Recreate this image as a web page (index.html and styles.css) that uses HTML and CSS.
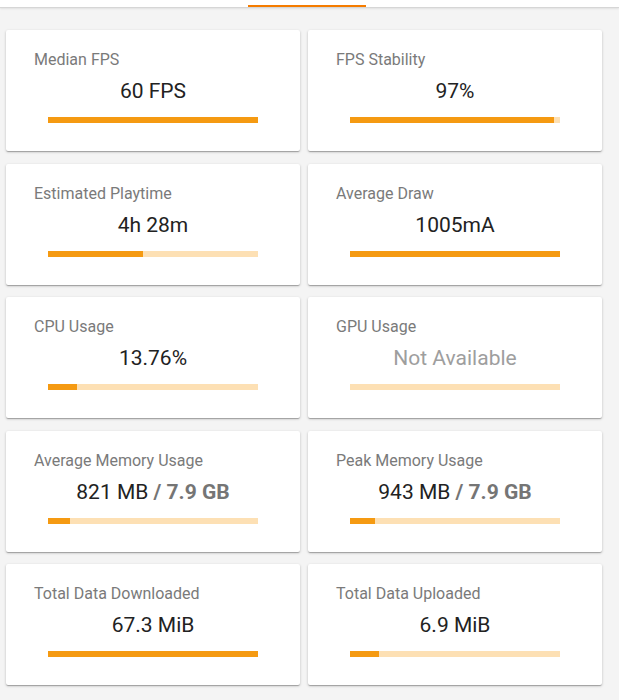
FILE: index.html
```html
<!DOCTYPE html>
<html lang="en">
<head>
    <meta charset="UTF-8">
    <meta name="viewport" content="width=device-width, initial-scale=1.0">
    <title>Session Stats</title>
    <link rel="stylesheet" href="styles.css">
</head>
<body>
    <div class="tabs">
        <div class="tab-indicator"></div>
    </div>

    <div class="stats">
        <div class="card">
            <div class="label">Median FPS</div>
            <div class="value">60 FPS</div>
            <div class="bar"><div class="fill" style="width: 100%;"></div></div>
        </div>
        <div class="card">
            <div class="label">FPS Stability</div>
            <div class="value">97%</div>
            <div class="bar"><div class="fill" style="width: 97%;"></div></div>
        </div>

        <div class="card">
            <div class="label">Estimated Playtime</div>
            <div class="value">4h 28m</div>
            <div class="bar"><div class="fill" style="width: 45%;"></div></div>
        </div>
        <div class="card">
            <div class="label">Average Draw</div>
            <div class="value">1005mA</div>
            <div class="bar"><div class="fill" style="width: 100%;"></div></div>
        </div>

        <div class="card">
            <div class="label">CPU Usage</div>
            <div class="value">13.76%</div>
            <div class="bar"><div class="fill" style="width: 13.76%;"></div></div>
        </div>
        <div class="card">
            <div class="label">GPU Usage</div>
            <div class="value muted">Not Available</div>
            <div class="bar"><div class="fill" style="width: 0%;"></div></div>
        </div>

        <div class="card">
            <div class="label">Average Memory Usage</div>
            <div class="value">821 MB <span class="total">/ 7.9 GB</span></div>
            <div class="bar"><div class="fill" style="width: 10.4%;"></div></div>
        </div>
        <div class="card">
            <div class="label">Peak Memory Usage</div>
            <div class="value">943 MB <span class="total">/ 7.9 GB</span></div>
            <div class="bar"><div class="fill" style="width: 11.9%;"></div></div>
        </div>

        <div class="card">
            <div class="label">Total Data Downloaded</div>
            <div class="value">67.3 MiB</div>
            <div class="bar"><div class="fill" style="width: 100%;"></div></div>
        </div>
        <div class="card">
            <div class="label">Total Data Uploaded</div>
            <div class="value">6.9 MiB</div>
            <div class="bar"><div class="fill" style="width: 14%;"></div></div>
        </div>
    </div>
</body>
</html>
```

FILE: styles.css
```css
html, body {
    margin: 0;
    padding: 0;
    background: #f4f4f4;
    font-family: Roboto, "Liberation Sans", sans-serif;
}

/* tab strip at the top */
.tabs {
    height: 7px;
    background: #fff;
    border-bottom: 1px solid #d6d6d6;
    box-shadow: 0 1px 2px rgba(0, 0, 0, 0.08);
    display: flex;
    align-items: flex-end;
    padding-left: 248px;
}

.tab-indicator {
    width: 118px;
    height: 2px;
    background: #f57c00;
}

.stats {
    display: grid;
    grid-template-columns: 294px 294px;
    column-gap: 8px;
    row-gap: 12.5px;
    padding: 22px 0 15px 6px;
}

.card {
    background: #fff;
    border-radius: 2px;
    box-shadow: 0 1px 3px rgba(0, 0, 0, 0.2), 0 1px 1px rgba(0, 0, 0, 0.14), 0 2px 1px -1px rgba(0, 0, 0, 0.12);
    padding: 20px 0 28px 0;
    display: flex;
    flex-direction: column;
    align-items: center;
}

.label {
    align-self: stretch;
    padding-left: 28px;
    font-size: 16px;
    line-height: 20px;
    color: #7a7a7a;
}

.value {
    margin-top: 7px;
    font-size: 21px;
    line-height: 28px;
    color: #222;
}

.value.muted {
    color: #9e9e9e;
}

.value .total {
    font-weight: bold;
    color: #757575;
}

.bar {
    margin-top: 12px;
    width: 210px;
    height: 6px;
    background: #fde0b4;
}

.fill {
    height: 100%;
    background: #f59a12;
}
```
